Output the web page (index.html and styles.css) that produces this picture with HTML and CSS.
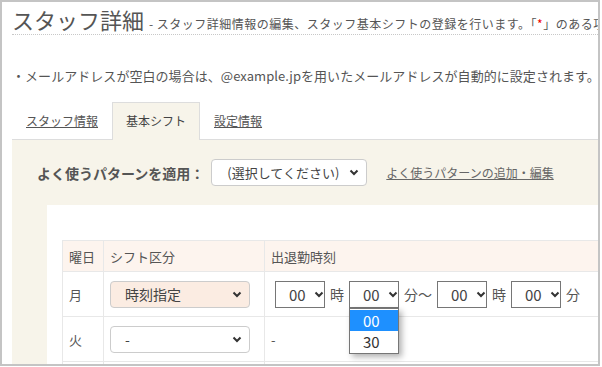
FILE: index.html
```html
<!DOCTYPE html>
<html lang="ja">
<head>
    <meta charset="UTF-8">
    <meta name="viewport" content="width=device-width, initial-scale=1.0">
    <title>スタッフ詳細</title>
    <link rel="stylesheet" href="styles.css">
</head>
<body>
    <div class="frame">
        <div class="page-head">
            <h1>スタッフ詳細 <small>- スタッフ詳細情報の編集、スタッフ基本シフトの登録を行います。「<span class="req">*</span>」のある項目は必須です。</small></h1>
        </div>

        <p class="note">・メールアドレスが空白の場合は、@example.jpを用いたメールアドレスが自動的に設定されます。</p>

        <div class="tabs">
            <a class="tab" href="#">スタッフ情報</a>
            <a class="tab active" href="#">基本シフト</a>
            <a class="tab" href="#">設定情報</a>
        </div>

        <div class="tab-panel">
            <div class="pattern-row">
                <span class="pattern-label">よく使うパターンを適用：</span>
                <div class="select pattern-select">
                    <span>(選択してください)</span>
                    <svg class="chev" width="10" height="7" viewBox="0 0 10 7"><path d="M1.5 1.5 L5 5 L8.5 1.5"/></svg>
                </div>
                <a class="pattern-link" href="#">よく使うパターンの追加・編集</a>
            </div>

            <div class="shift-box">
                <table class="shift-table">
                    <tr>
                        <th class="col-day">曜日</th>
                        <th class="col-type">シフト区分</th>
                        <th>出退勤時刻</th>
                    </tr>
                    <tr>
                        <td>月</td>
                        <td>
                            <div class="select type-select filled">
                                <span>時刻指定</span>
                                <svg class="chev" width="10" height="7" viewBox="0 0 10 7"><path d="M1.5 1.5 L5 5 L8.5 1.5"/></svg>
                            </div>
                        </td>
                        <td>
                            <div class="times">
                                <div class="tsel">00<svg class="chev" width="10" height="7" viewBox="0 0 10 7"><path d="M1.5 1.5 L5 5 L8.5 1.5"/></svg></div>
                                <span class="unit">時</span>
                                <div class="tsel open">00<svg class="chev" width="10" height="7" viewBox="0 0 10 7"><path d="M1.5 1.5 L5 5 L8.5 1.5"/></svg>
                                    <ul class="dropdown">
                                        <li class="current">00</li>
                                        <li>30</li>
                                    </ul>
                                </div>
                                <span class="unit">分～</span>
                                <div class="tsel">00<svg class="chev" width="10" height="7" viewBox="0 0 10 7"><path d="M1.5 1.5 L5 5 L8.5 1.5"/></svg></div>
                                <span class="unit">時</span>
                                <div class="tsel">00<svg class="chev" width="10" height="7" viewBox="0 0 10 7"><path d="M1.5 1.5 L5 5 L8.5 1.5"/></svg></div>
                                <span class="unit">分</span>
                            </div>
                        </td>
                    </tr>
                    <tr>
                        <td>火</td>
                        <td>
                            <div class="select type-select">
                                <span>-</span>
                                <svg class="chev" width="10" height="7" viewBox="0 0 10 7"><path d="M1.5 1.5 L5 5 L8.5 1.5"/></svg>
                            </div>
                        </td>
                        <td>-</td>
                    </tr>
                    <tr>
                        <td></td>
                        <td></td>
                        <td></td>
                    </tr>
                </table>
            </div>
        </div>
    </div>
</body>
</html>
```

FILE: styles.css
```css
html, body {
    margin: 0;
    padding: 0;
    background: #fff;
}

body {
    font-family: "Noto Sans CJK JP", "Noto Sans", sans-serif;
    color: #555;
}

.frame {
    box-sizing: border-box;
    width: 600px;
    height: 366px;
    border: 2px solid #c4c4c4;
    padding-left: 10px;
    overflow: hidden;
}

.page-head {
    padding-top: 4px;
    padding-bottom: 2px;
    border-bottom: 1px dotted #c8c8c8;
    white-space: nowrap;
    overflow: hidden;
}

.page-head h1 {
    margin: 0;
    height: 26px;
    font-size: 22px;
    line-height: 26px;
    font-weight: normal;
    color: #555;
}

.page-head small {
    font-size: 12px;
    letter-spacing: 0.5px;
    line-height: 1;
    color: #555;
}

.req {
    color: #e00;
}

.note {
    margin: 31px 0 16px 0;
    height: 20px;
    font-size: 13px;
    letter-spacing: 0.05px;
    line-height: 20px;
    white-space: nowrap;
}

.tabs {
    display: flex;
    box-sizing: border-box;
    height: 38px;
    border-bottom: 1px solid #ddd;
}

.tab {
    box-sizing: border-box;
    height: 38px;
    padding: 0 13px;
    border: 1px solid transparent;
    border-bottom: none;
    line-height: 36px;
    font-size: 12px;
    color: #555;
}

.tab.active {
    background: #f7f4ea;
    border-color: #ddd;
    text-decoration: none;
    color: #444;
}

.tab-panel {
    background: #f7f4ea;
    padding: 19px 0 0 25px;
    height: 300px;
}

.pattern-row {
    display: flex;
    align-items: center;
    height: 27px;
}

.pattern-label {
    font-size: 14px;
    font-weight: bold;
    color: #555;
    margin-right: 7px;
}

.select {
    box-sizing: border-box;
    display: flex;
    align-items: center;
    justify-content: space-between;
    height: 27px;
    background: #fff;
    border: 1px solid #ccc;
    border-radius: 4px;
    color: #444;
}

.chev {
    flex: none;
}

.chev path {
    fill: none;
    stroke: #333;
    stroke-width: 2;
}

.pattern-select {
    width: 156px;
    padding: 0 7px 0 15px;
    font-size: 13px;
}

.pattern-link {
    margin-left: 19px;
    font-size: 12px;
    color: #666;
}

.shift-box {
    margin: 19px 0 0 10px;
    background: #fff;
    padding: 35px 0 0 15px;
    height: 200px;
}

.shift-table {
    border-collapse: collapse;
    width: 600px;
    font-size: 13px;
    color: #555;
}

.shift-table th,
.shift-table td {
    border: 1px solid #e8e8e8;
    text-align: left;
    padding: 0 6px;
}

.shift-table th {
    height: 30px;
    background: #fdf4ee;
    font-weight: normal;
}

.shift-table td {
    height: 44px;
}

.col-day {
    width: 28px;
}

.col-type {
    width: 148px;
}

.type-select {
    width: 140px;
    padding: 0 7px 0 14px;
    font-size: 14px;
}

.type-select.filled {
    background: #fbece2;
}

.times {
    display: flex;
    align-items: center;
    padding-left: 4px;
}

.tsel {
    position: relative;
    box-sizing: border-box;
    display: flex;
    align-items: center;
    width: 50px;
    height: 27px;
    padding-left: 13px;
    border: 1px solid #767676;
    font-size: 15px;
    color: #444;
}

.tsel .chev {
    margin-left: 8px;
}

.unit {
    font-size: 14px;
    margin: 0 5px 0 5px;
}

.dropdown {
    position: absolute;
    left: -1px;
    top: 26px;
    width: 50px;
    box-sizing: border-box;
    margin: 0;
    padding: 1px 0;
    list-style: none;
    background: #fff;
    border: 1px solid #767676;
    box-shadow: 3px 3px 6px rgba(0, 0, 0, 0.3);
    font-size: 15px;
}

.dropdown li {
    height: 21px;
    line-height: 21px;
    padding-left: 13px;
    color: #333;
}

.dropdown li.current {
    background: #1e90ff;
    color: #fff;
}
```
